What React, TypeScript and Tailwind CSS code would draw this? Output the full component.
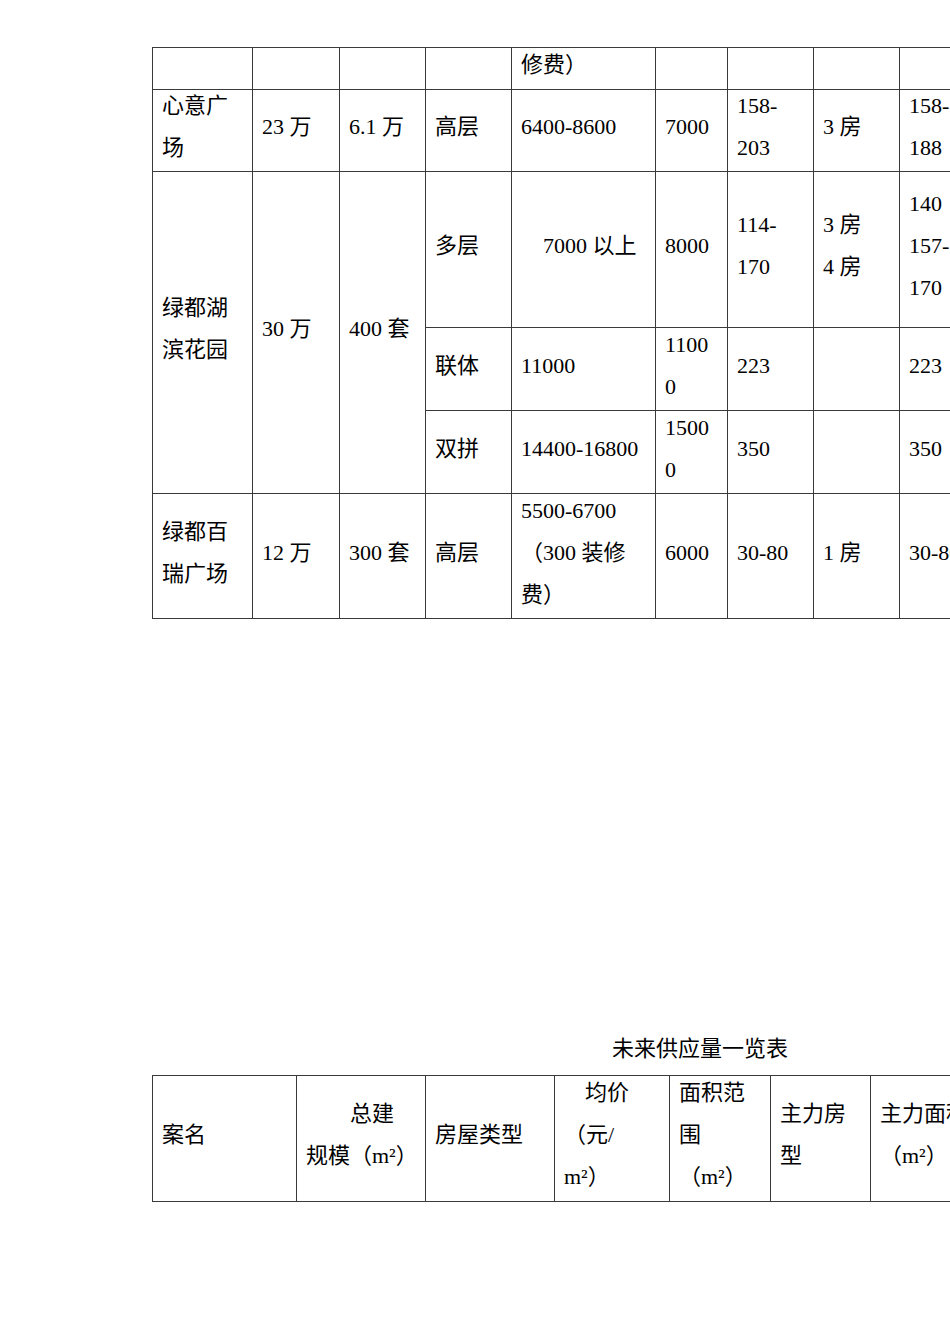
import React from "react";

type Line = { t: string; indent?: string };
type CellDef = { lines: (string | Line)[]; span?: boolean; pad?: string };

const C = (lines: (string | Line)[] | string, opts: Partial<CellDef> = {}): CellDef => ({
  lines: typeof lines === "string" ? (lines ? [lines] : []) : lines,
  ...opts,
});

const Cell = ({ cell }: { cell: CellDef }) => (
  <div
    className={`border-r border-b border-[#3a3a3a] flex flex-col justify-center pb-[7px] whitespace-nowrap overflow-hidden ${
      cell.span ? "row-span-3" : ""
    } ${cell.pad ?? "pl-[9px]"}`}
  >
    {cell.lines.map((l, i) =>
      typeof l === "string" ? (
        <div key={i}>{l}</div>
      ) : (
        <div key={i} className={l.indent}>
          {l.t}
        </div>
      )
    )}
  </div>
);

const table1: CellDef[] = [
  // row 1
  C(""), C(""), C(""), C(""), C("修费）"), C(""), C(""), C(""), C(""),
  // row 2
  C(["心意广", "场"]), C("23 万"), C("6.1 万"), C("高层"), C("6400-8600"), C("7000"), C(["158-", "203"]), C("3 房"), C(["158-", "188"]),
  // row 3
  C(["绿都湖", "滨花园"], { span: true }), C("30 万", { span: true }), C("400 套", { span: true }),
  C("多层"), C("7000 以上", { pad: "pl-[31px]" }), C("8000"), C(["114-", "170"]), C(["3 房", "4 房"]), C(["140", "157-", "170"]),
  // row 4
  C("联体"), C("11000"), C(["1100", "0"]), C("223"), C(""), C("223"),
  // row 5
  C("双拼"), C("14400-16800"), C(["1500", "0"]), C("350"), C(""), C("350"),
  // row 6
  C(["绿都百", "瑞广场"]), C("12 万"), C("300 套"), C("高层"), C(["5500-6700", "（300 装修", "费）"]), C("6000"), C("30-80"), C("1 房"), C("30-80"),
];

const table2: CellDef[] = [
  C("案名"),
  C([{ t: "总建", indent: "pl-[44px]" }, "规模（m²）"]),
  C("房屋类型"),
  C([{ t: "均价", indent: "pl-[21px]" }, "（元/", "m²）"]),
  C(["面积范", "围", "（m²）"]),
  C(["主力房", "型"]),
  C(["主力面积", "（m²）"]),
];

export default function App() {
  return (
    <div className="w-[950px] h-[1344px] overflow-hidden bg-white text-black font-['Liberation_Serif','Noto_Sans_CJK_SC',serif] text-[22px] leading-[42px]">
      <div className="pt-[47px] pl-[152px]">
        <div className="grid w-max grid-cols-[100px_87px_86px_86px_144px_72px_86px_86px_120px] grid-rows-[42px_82px_156px_83px_83px_125px] border-t border-l border-[#3a3a3a]">
          {table1.map((c, i) => (
            <Cell key={i} cell={c} />
          ))}
        </div>

        <div className="mt-[409px] h-[42px] pl-[460px] whitespace-nowrap">未来供应量一览表</div>

        <div className="mt-[5px] grid w-max grid-cols-[144px_129px_129px_115px_101px_100px_120px] grid-rows-[126px] border-t border-l border-[#3a3a3a]">
          {table2.map((c, i) => (
            <Cell key={i} cell={c} />
          ))}
        </div>
      </div>
    </div>
  );
}
